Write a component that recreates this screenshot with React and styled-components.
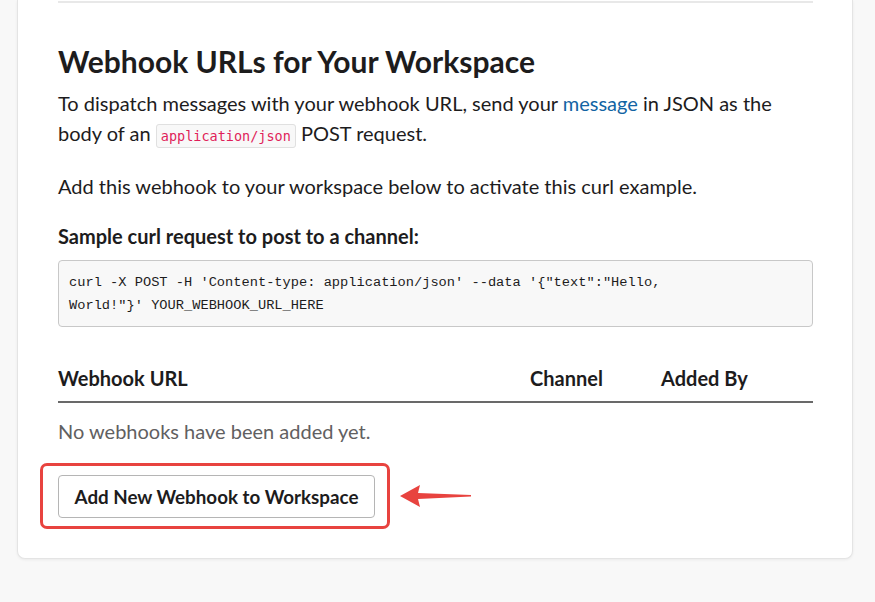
import React from "react";
import styled, { createGlobalStyle } from "styled-components";

const Global = createGlobalStyle`
  html, body { margin: 0; padding: 0; background: #f8f8f8; }
  body { font-family: Lato, "Open Sans", sans-serif; color: #1d1c1d; }
`;

const Page = styled.div`
  padding: 0 22px 40px 17px;
  min-height: 602px;
  box-sizing: border-box;
`;

const Card = styled.section`
  background: #fff;
  border: 1px solid #e4e4e4;
  border-top: none;
  border-radius: 0 0 8px 8px;
  box-shadow: 0 1px 3px rgba(0, 0, 0, 0.06);
  padding: 1px 39px 29px 40px;
`;

const Divider = styled.hr`
  margin: 0;
  border: none;
  border-top: 2px solid #e8e8e8;
`;

const Heading = styled.h2`
  margin: 40px 0 9px;
  font-size: 30px;
  line-height: 36px;
  font-weight: 700;
`;

const Para = styled.p`
  margin: 0 0 ${(p) => p.$mb || 0}px;
  font-size: 20px;
  line-height: 30px;
  font-weight: ${(p) => (p.$bold ? 700 : 400)};
`;

const Link = styled.a`
  color: #1264a3;
  text-decoration: none;
`;

const InlineCode = styled.code`
  font-family: "DejaVu Sans Mono", "Liberation Mono", monospace;
  font-size: 13.5px;
  line-height: 18px;
  color: #e01e5a;
  background: #f8f8f8;
  border: 1px solid #e0e0e0;
  border-radius: 3px;
  padding: 3px 4px;
`;

const CodeBlock = styled.pre`
  margin: 9px 0 0;
  font-family: "Liberation Mono", monospace;
  font-size: 13.7px;
  line-height: 23px;
  background: #f8f8f8;
  border: 1px solid #c8c8c8;
  border-radius: 4px;
  padding: 9.5px 10px;
  white-space: pre-wrap;
  color: #1d1c1d;
`;

const Table = styled.table`
  width: 100%;
  border-collapse: collapse;
  margin-top: 28px;
`;

const Th = styled.th`
  text-align: left;
  font-size: 20px;
  line-height: 30px;
  font-weight: 700;
  padding: 8px 0;
  border-bottom: 2px solid #696969;
  width: ${(p) => p.$w || "auto"};
`;

const Td = styled.td`
  font-size: 20px;
  line-height: 30px;
  color: #616061;
  padding: 13px 0;
`;

const ActionRow = styled.div`
  display: flex;
  align-items: center;
  gap: 9px;
  margin: 4px 0 0 -18px;
`;

const Highlight = styled.div`
  border: 3px solid #e8433f;
  border-radius: 7px;
  padding: 9px 12px 8px 15px;
`;

const Button = styled.button`
  font-family: Lato, sans-serif;
  font-size: 18.8px;
  font-weight: 700;
  color: #1d1c1d;
  background: #fff;
  border: 1px solid #b5b5b5;
  border-radius: 4px;
  height: 43px;
  width: 317px;
  padding: 0 10px;
  cursor: pointer;
`;

const Arrow = () => (
  <svg width="74" height="24" viewBox="0 0 74 24">
    <path d="M1 12 L21 1 L19 9 L72 11 L72 12.5 L19 15 L21 23 Z" fill="#e8433f" />
  </svg>
);

export default function App() {
  return (
    <>
      <Global />
      <Page>
        <Card>
          <Divider />
          <Heading>Webhook URLs for Your Workspace</Heading>
          <Para $mb={23}>
            To dispatch messages with your webhook URL, send your <Link href="#">message</Link> in JSON as the
            body of an <InlineCode>application/json</InlineCode> POST request.
          </Para>
          <Para $mb={20}>Add this webhook to your workspace below to activate this curl example.</Para>
          <Para $bold>Sample curl request to post to a channel:</Para>
          <CodeBlock>{`curl -X POST -H 'Content-type: application/json' --data '{"text":"Hello,\nWorld!"}' YOUR_WEBHOOK_URL_HERE`}</CodeBlock>
          <Table>
            <thead>
              <tr>
                <Th $w="472px">Webhook URL</Th>
                <Th $w="131px">Channel</Th>
                <Th>Added By</Th>
              </tr>
            </thead>
            <tbody>
              <tr>
                <Td colSpan={3}>No webhooks have been added yet.</Td>
              </tr>
            </tbody>
          </Table>
          <ActionRow>
            <Highlight>
              <Button>Add New Webhook to Workspace</Button>
            </Highlight>
            <Arrow />
          </ActionRow>
        </Card>
      </Page>
    </>
  );
}
